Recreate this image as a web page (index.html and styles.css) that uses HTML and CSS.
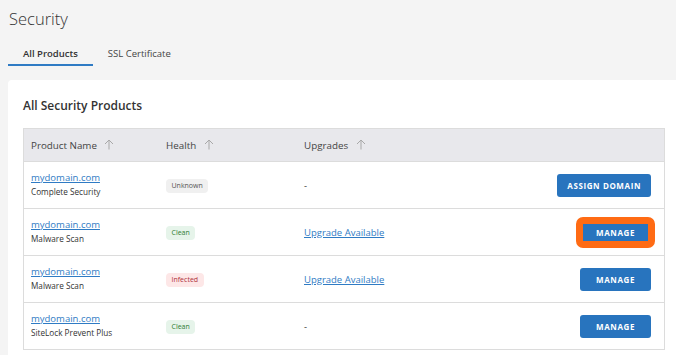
FILE: index.html
```html
<!DOCTYPE html>
<html lang="en">
<head>
    <meta charset="UTF-8">
    <meta name="viewport" content="width=device-width, initial-scale=1.0">
    <title>Security</title>
    <link rel="stylesheet" href="styles.css">
</head>
<body>
    <h1 class="page-title">Security</h1>
    <div class="tabs">
        <div class="tab active">All Products</div>
        <div class="tab">SSL Certificate</div>
    </div>
    <div class="card">
        <h2 class="card-title">All Security Products</h2>
        <table class="products">
            <thead>
                <tr>
                    <th class="col-name">Product Name <svg class="sort" viewBox="0 0 10 11"><path d="M5 10.5V1M1 5l4-4 4 4"/></svg></th>
                    <th class="col-health">Health <svg class="sort" viewBox="0 0 10 11"><path d="M5 10.5V1M1 5l4-4 4 4"/></svg></th>
                    <th class="col-upgrades">Upgrades <svg class="sort" viewBox="0 0 10 11"><path d="M5 10.5V1M1 5l4-4 4 4"/></svg></th>
                    <th class="col-action"></th>
                </tr>
            </thead>
            <tbody>
                <tr>
                    <td><a href="#" class="domain">mydomain.com</a><div class="product">Complete Security</div></td>
                    <td><span class="badge badge-unknown">Unknown</span></td>
                    <td>-</td>
                    <td class="action"><button class="btn">Assign Domain</button></td>
                </tr>
                <tr>
                    <td><a href="#" class="domain">mydomain.com</a><div class="product">Malware Scan</div></td>
                    <td><span class="badge badge-clean">Clean</span></td>
                    <td><a href="#" class="upgrade">Upgrade Available</a></td>
                    <td class="action"><button class="btn btn-highlight">Manage</button></td>
                </tr>
                <tr>
                    <td><a href="#" class="domain">mydomain.com</a><div class="product">Malware Scan</div></td>
                    <td><span class="badge badge-infected">Infected</span></td>
                    <td><a href="#" class="upgrade">Upgrade Available</a></td>
                    <td class="action"><button class="btn">Manage</button></td>
                </tr>
                <tr>
                    <td><a href="#" class="domain">mydomain.com</a><div class="product">SiteLock Prevent Plus</div></td>
                    <td><span class="badge badge-clean">Clean</span></td>
                    <td>-</td>
                    <td class="action"><button class="btn">Manage</button></td>
                </tr>
            </tbody>
        </table>
    </div>
</body>
</html>
```

FILE: styles.css
```css
body {
    font-family: 'Open Sans', 'Noto Sans', sans-serif;
    background-color: #f4f4f4;
    margin: 0;
    padding: 0 0 0 8px;
    color: #333;
}
.page-title {
    font-size: 16.5px;
    font-weight: 300;
    margin: 0;
    padding: 5px 0 0 1px;
    line-height: 28px;
    color: #333;
}
.tabs {
    display: flex;
    margin-top: 10px;
}
.tab {
    font-size: 9.5px;
    color: #444;
    padding: 4px 15px 3px 15px;
    line-height: 14px;
    border-bottom: 2px solid transparent;
}
.tab.active {
    font-weight: 600;
    color: #333;
    border-bottom-color: #2f7bc4;
}
.card {
    background-color: white;
    border-radius: 4px 0 0 0;
    margin-top: 14px;
    padding: 17px 11px 20px 15px;
}
.card-title {
    font-size: 12px;
    font-weight: 600;
    margin: 0 0 13px 0;
    line-height: 18px;
    color: #333;
}
.products {
    width: 100%;
    border-collapse: collapse;
    border: 1px solid #dcdcdc;
    font-size: 9.5px;
}
.products th {
    background-color: #e8e8ec;
    text-align: left;
    font-size: 9.8px;
    font-weight: 500;
    color: #444;
    height: 32px;
    padding: 0 7px;
    border-bottom: 1px solid #dcdcdc;
}
.sort {
    width: 10px;
    height: 11px;
    margin-left: 5px;
    vertical-align: -1px;
    fill: none;
    stroke: #a8a8a8;
    stroke-width: 1;
}
.col-name { width: 121px; }
.col-health { width: 124px; }
.col-upgrades { width: 180px; }
.products td {
    height: 46px;
    padding: 0 7px;
    border-bottom: 1px solid #dcdcdc;
    vertical-align: middle;
    color: #333;
}
.domain {
    color: #2f7bc4;
    display: block;
    line-height: 14px;
}
.product {
    font-size: 8.2px;
    line-height: 14px;
    color: #333;
}
.upgrade {
    color: #2f7bc4;
}
.badge {
    display: inline-block;
    font-size: 7px;
    line-height: 14px;
    padding: 0 5.5px;
    border-radius: 4px;
}
.badge-unknown {
    background-color: #f0f0f0;
    color: #555;
}
.badge-clean {
    background-color: #e6f4ea;
    color: #2e7d32;
}
.badge-infected {
    background-color: #fde7e7;
    color: #b0323a;
}
.action {
    text-align: right;
}
.products td.action {
    padding-right: 13px;
}
.btn {
    font-family: inherit;
    background-color: #2874be;
    color: white;
    border: none;
    border-radius: 3px;
    font-size: 8px;
    font-weight: 700;
    letter-spacing: 0.6px;
    text-transform: uppercase;
    height: 23px;
    padding: 0 10px;
    min-width: 71px;
    cursor: pointer;
}
.btn-highlight {
    outline: 7px solid #ff6b14;
    outline-offset: -3px;
}
```
